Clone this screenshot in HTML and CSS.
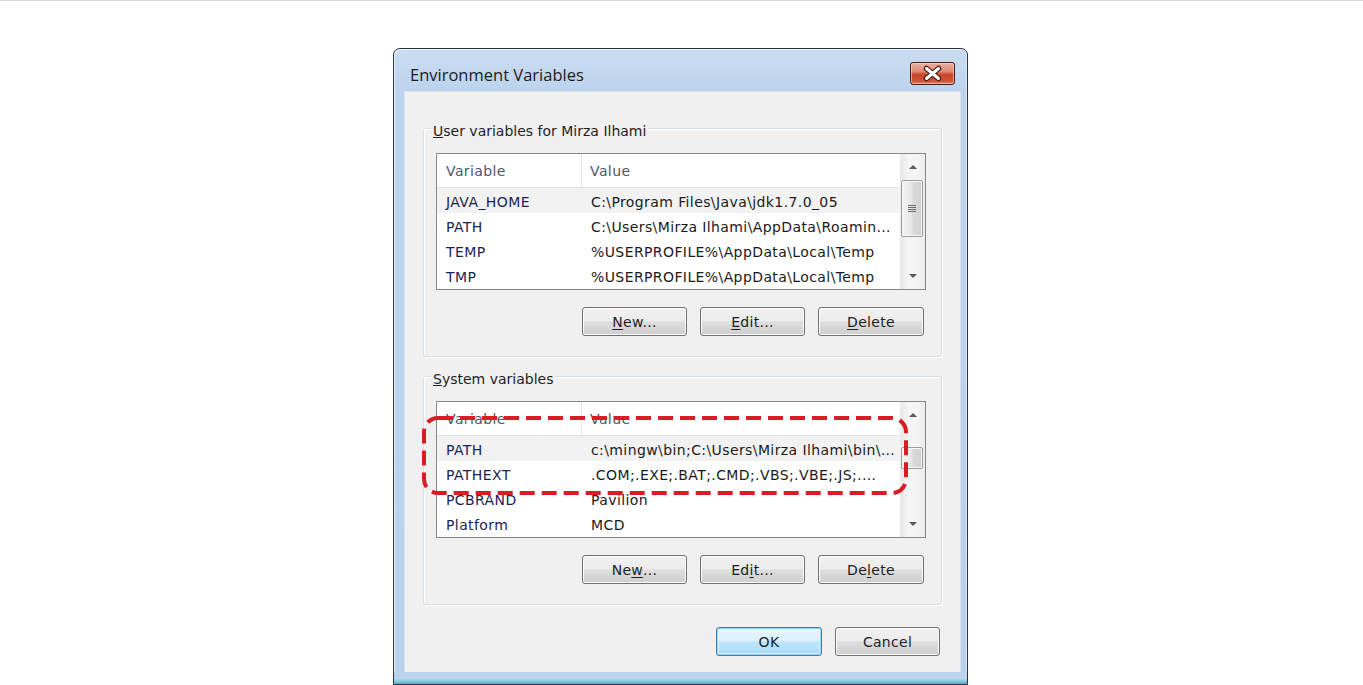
FILE: index.html
```html
<!DOCTYPE html>
<html>
<head>
<meta charset="utf-8">
<link rel="stylesheet" href="styles.css">
</head>
<body>
<div class="window">
  <div class="titlebar">
    <span class="title">Environment Variables</span>
    <span class="close">
      <svg width="45" height="23" viewBox="0 0 45 23">
        <path d="M16.5 6.5 L28.5 16.5 M28.5 6.5 L16.5 16.5" stroke="#3a1810" stroke-width="5.5" stroke-linecap="round"/>
        <path d="M16.5 6.5 L28.5 16.5 M28.5 6.5 L16.5 16.5" stroke="#ffffff" stroke-width="3.2" stroke-linecap="round"/>
      </svg>
    </span>
  </div>
  <div class="client">
    <div class="group">
      <div class="legend"><u>U</u>ser variables for Mirza Ilhami</div>
      <div class="list">
        <div class="list-body">
          <div class="row head"><span class="c1">Variable</span><span class="c2">Value</span></div>
          <div class="row sel"><span class="c1">JAVA_HOME</span><span class="c2">C:\Program Files\Java\jdk1.7.0_05</span></div>
          <div class="row"><span class="c1">PATH</span><span class="c2">C:\Users\Mirza Ilhami\AppData\Roamin…</span></div>
          <div class="row"><span class="c1">TEMP</span><span class="c2">%USERPROFILE%\AppData\Local\Temp</span></div>
          <div class="row"><span class="c1">TMP</span><span class="c2">%USERPROFILE%\AppData\Local\Temp</span></div>
        </div>
        <div class="scrollbar">
          <div class="arrow"><span class="tri-up"></span></div>
          <div class="track"><div class="thumb thumb-user"><span class="grip"></span></div></div>
          <div class="arrow"><span class="tri-down"></span></div>
        </div>
      </div>
      <div class="btnrow">
        <span class="btn w105"><u>N</u>ew...</span>
        <span class="btn w105"><u>E</u>dit...</span>
        <span class="btn w106"><u>D</u>elete</span>
      </div>
    </div>

    <div class="group group2">
      <div class="legend"><u>S</u>ystem variables</div>
      <div class="list">
        <div class="list-body">
          <div class="row head"><span class="c1">Variable</span><span class="c2">Value</span></div>
          <div class="row sel"><span class="c1">PATH</span><span class="c2">c:\mingw\bin;C:\Users\Mirza Ilhami\bin\…</span></div>
          <div class="row"><span class="c1">PATHEXT</span><span class="c2">.COM;.EXE;.BAT;.CMD;.VBS;.VBE;.JS;.…</span></div>
          <div class="row"><span class="c1">PCBRAND</span><span class="c2">Pavilion</span></div>
          <div class="row"><span class="c1">Platform</span><span class="c2">MCD</span></div>
        </div>
        <div class="scrollbar">
          <div class="arrow"><span class="tri-up"></span></div>
          <div class="track"><div class="thumb thumb-sys"></div></div>
          <div class="arrow"><span class="tri-down"></span></div>
        </div>
        <svg class="highlight" width="490" height="83" viewBox="0 0 490 83">
          <rect x="4" y="3" width="482" height="75" rx="14" ry="14" fill="none" stroke="#dc1c24" stroke-width="4" stroke-dasharray="15 7"/>
        </svg>
      </div>
      <div class="btnrow">
        <span class="btn w105">Ne<u>w</u>...</span>
        <span class="btn w105">Ed<u>i</u>t...</span>
        <span class="btn w106">De<u>l</u>ete</span>
      </div>
    </div>

    <div class="okrow">
      <span class="btn ok w106">OK</span>
      <span class="btn w105">Cancel</span>
    </div>
  </div>
  <div class="bottom-edge"></div>
</div>
</body>
</html>
```
FILE: styles.css
```css
html, body {
  margin: 0;
  padding: 0;
}
body {
  background: #ffffff;
  border-top: 1px solid #d6d6d6;
  height: 684px;
  overflow: hidden;
  font-family: "DejaVu Sans", sans-serif;
  font-size: 14px;
  color: #1e1e1e;
}
.window {
  margin: 47px 0 0 393px;
  width: 575px;
  height: 637px;
  box-sizing: border-box;
  border: 1px solid #2b333d;
  border-radius: 7px 7px 0 0;
  background: linear-gradient(180deg, #cadcf1 0px, #bcd3ec 43px, #b9d1ea 100%);
  box-shadow: inset 1px 1px 0 rgba(255,255,255,0.7), inset -1px 0 0 rgba(255,255,255,0.5);
  display: flex;
  flex-direction: column;
}
.titlebar {
  height: 43px;
  flex: none;
  display: flex;
  align-items: flex-start;
  padding: 0 12px 0 16px;
}
.title {
  font-family: "Open Sans", "Noto Sans", sans-serif;
  font-size: 16.5px;
  line-height: 20px;
  margin-top: 16px;
  color: #1b1b1b;
}
.close {
  margin-left: auto;
  margin-top: 13px;
  width: 45px;
  height: 23px;
  box-sizing: border-box;
  border: 1px solid #4a1d14;
  border-radius: 3px;
  background: linear-gradient(180deg, #eab2a4 0%, #dd8a74 40%, #c9452c 55%, #cf5236 85%, #e0806a 100%);
  box-shadow: inset 0 0 0 1px rgba(255,220,210,0.55);
  display: flex;
  align-items: center;
  justify-content: center;
  overflow: hidden;
}
.close svg {
  display: block;
  flex: none;
}
.client {
  flex: none;
  height: 580px;
  margin: 0 7px 0 11px;
  box-sizing: border-box;
  background: #f0f0f0;
  padding: 36px 18px 0 18px;
  box-shadow: 0 0 0 1px #d7e3f1;
}
.group {
  border: 1px solid #d5dfe5;
  border-radius: 3px;
  box-shadow: inset 1px 1px 0 #ffffff, 1px 1px 0 #ffffff;
  padding: 0 15px 20px 12px;
}
.group2 {
  margin-top: 19px;
}
.legend {
  width: fit-content;
  height: 18px;
  line-height: 18px;
  margin: -7px 0 0 -5px;
  padding: 0 2px;
  background: #f0f0f0;
  color: #1e1e1e;
}
.list {
  position: relative;
  margin-top: 13px;
  height: 137px;
  box-sizing: border-box;
  border: 1px solid #828790;
  background: #ffffff;
  display: flex;
}
.list-body {
  flex: 1;
  min-width: 0;
  overflow: hidden;
}
.row {
  display: flex;
  align-items: center;
  height: 25px;
  box-sizing: border-box;
  padding-top: 3px;
  white-space: nowrap;
  letter-spacing: 0.4px;
}
.row .c1 {
  width: 145px;
  flex: none;
  box-sizing: border-box;
  padding-left: 9px;
  color: #1b2350;
}
.row .c2 {
  flex: 1;
  min-width: 0;
  overflow: hidden;
  padding-left: 9px;
  color: #1a1a1a;
}
.row.head {
  height: 34px;
  padding-top: 0;
  border-bottom: 1px solid #e2e2e2;
  align-items: stretch;
}
.row.head .c1 {
  border-right: 1px solid #e5e5e5;
  display: flex;
  align-items: center;
  padding-top: 1px;
  color: #4c5866;
}
.row.head .c2 {
  display: flex;
  align-items: center;
  padding-left: 8px;
  padding-top: 1px;
  color: #4c5866;
}
.row.sel {
  background: #f2f2f2;
}
.scrollbar {
  width: 24px;
  flex: none;
  display: flex;
  flex-direction: column;
  background: linear-gradient(90deg, #e9e9e9 0%, #f4f4f4 30%, #f4f4f4 70%, #ebebeb 100%);
  border-left: 1px solid #ececec;
}
.arrow {
  height: 26px;
  flex: none;
  display: flex;
  align-items: center;
  justify-content: center;
}
.tri-up {
  width: 0;
  height: 0;
  border-left: 4px solid transparent;
  border-right: 4px solid transparent;
  border-bottom: 4px solid #5a5a5a;
}
.tri-down {
  width: 0;
  height: 0;
  border-left: 4px solid transparent;
  border-right: 4px solid transparent;
  border-top: 4px solid #5a5a5a;
}
.track {
  flex: 1;
  display: flex;
  flex-direction: column;
}
.thumb {
  margin: 0 2px 0 0;
  box-sizing: border-box;
  border: 1px solid #9b9b9b;
  border-radius: 2px;
  background: linear-gradient(90deg, #f4f4f4 0%, #e8e8e8 45%, #d9d9d9 55%, #cfcfcf 100%);
  box-shadow: inset 0 0 0 1px #f8f8f8;
  display: flex;
  align-items: center;
  justify-content: center;
}
.thumb-user {
  height: 57px;
  margin-top: 0;
}
.thumb-sys {
  height: 22px;
  margin-top: 19px;
}
.grip {
  width: 8px;
  height: 7px;
  background: repeating-linear-gradient(180deg, #6b6b6b 0 1px, transparent 1px 2px);
}
.btnrow {
  display: flex;
  justify-content: flex-end;
  gap: 13px;
  margin-top: 17px;
  padding-right: 2px;
}
.okrow {
  display: flex;
  justify-content: flex-end;
  gap: 13px;
  margin-top: 22px;
  padding-right: 2px;
}
.btn {
  height: 29px;
  box-sizing: border-box;
  border: 1px solid #707070;
  border-radius: 3px;
  background: linear-gradient(180deg, #f2f2f2 0%, #ebebeb 48%, #dddddd 52%, #cfcfcf 100%);
  box-shadow: inset 0 0 0 1px #fbfbfb;
  display: flex;
  align-items: center;
  justify-content: center;
  padding-top: 1px;
  color: #1e1e1e;
  font-size: 14px;
  letter-spacing: 0.3px;
}
.btn u {
  text-underline-offset: 2px;
}
.w105 { width: 105px; }
.w106 { width: 106px; }
.btn.ok {
  border-color: #3c7fb1;
  background: linear-gradient(180deg, #eaf6fd 0%, #d9f0fc 48%, #bee6fd 52%, #a7d9f5 100%);
  box-shadow: inset 0 0 0 1px #8fd5f8, inset 0 0 0 2px rgba(255,255,255,0.5);
}
.highlight {
  position: absolute;
  left: -17px;
  top: 13px;
  overflow: visible;
  pointer-events: none;
}
.bottom-edge {
  flex: 1;
  background: linear-gradient(180deg, #bcd3ec 0%, #bcd3ec 55%, #8ccbe0 75%, #3fb3cd 100%);
}
```
